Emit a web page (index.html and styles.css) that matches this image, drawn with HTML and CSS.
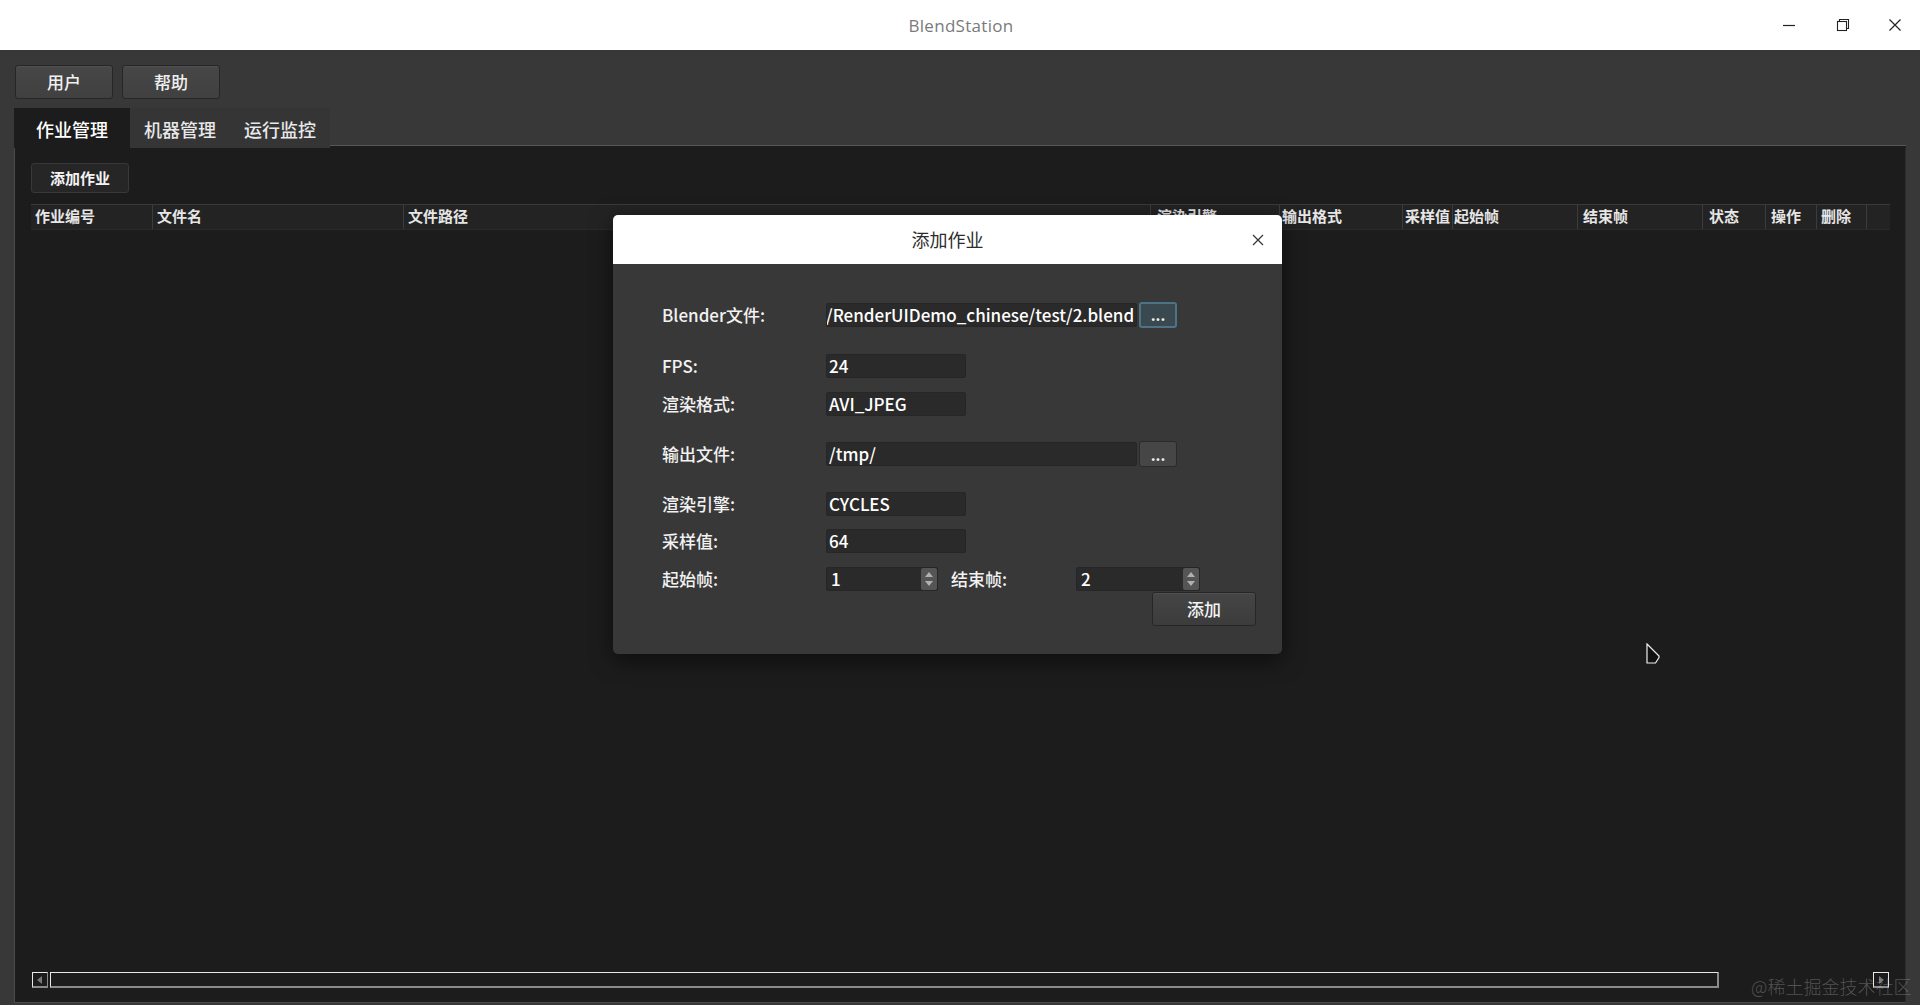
FILE: index.html
```html
<!DOCTYPE html>
<html lang="zh-CN">
<head>
<meta charset="utf-8">
<title>BlendStation</title>
<link rel="stylesheet" href="styles.css">
</head>
<body>
<div class="window">
  <header class="titlebar">
    <div></div>
    <div class="title">BlendStation</div>
    <div class="controls">
      <span class="ctl"><svg width="14" height="14" viewBox="0 0 14 14"><path d="M1 7.5h12" stroke="#222" stroke-width="1.2"/></svg></span>
      <span class="ctl"><svg width="14" height="14" viewBox="0 0 14 14" fill="none" stroke="#222" stroke-width="1.1"><rect x="1.5" y="3.5" width="9" height="9"/><path d="M3.5 3.5V1.5h9v9h-2"/></svg></span>
      <span class="ctl last"><svg width="14" height="14" viewBox="0 0 14 14"><path d="M1.5 1.5l11 11M12.5 1.5l-11 11" stroke="#222" stroke-width="1.2"/></svg></span>
    </div>
  </header>

  <main class="app">
    <div class="toolbar">
      <button class="tb-btn">用户</button>
      <button class="tb-btn">帮助</button>
    </div>
    <div class="tabs">
      <div class="tab active">作业管理</div>
      <div class="tab">机器管理</div>
      <div class="tab">运行监控</div>
      <div class="tab-fill"></div>
    </div>
    <section class="panel">
      <button class="small-btn">添加作业</button>
      <div class="table">
        <div class="thead">
          <div class="th c1">作业编号</div>
          <div class="th c2">文件名</div>
          <div class="th c3">文件路径</div>
          <div class="th c4">渲染引擎</div>
          <div class="th c5">输出格式</div>
          <div class="th c6">采样值</div>
          <div class="th c7">起始帧</div>
          <div class="th c8">结束帧</div>
          <div class="th c9">状态</div>
          <div class="th c10">操作</div>
          <div class="th c11">删除</div>
          <div class="th c12"></div>
        </div>
        <div class="tbody"></div>
      </div>
      <div class="hscroll">
        <div class="sb-arrow"><svg width="6" height="8" viewBox="0 0 6 8"><path d="M5 0L0 4l5 4z" fill="#777"/></svg></div>
        <div class="sb-track"></div>
        <div class="sb-arrow right"><svg width="6" height="8" viewBox="0 0 6 8"><path d="M1 0l5 4-5 4z" fill="#777"/></svg></div>
      </div>
    </section>
  </main>

  <div class="dialog">
    <div class="dlg-head">
      <div></div>
      <div class="dlg-title">添加作业</div>
      <div class="dlg-close"><svg width="12" height="12" viewBox="0 0 12 12"><path d="M1 1l10 10M11 1L1 11" stroke="#333" stroke-width="1.2"/></svg></div>
    </div>
    <div class="dlg-body">
      <div class="row tall">
        <div class="label">Blender文件:</div>
        <div class="inline">
          <div class="field wide scrolled">/RenderUIDemo_chinese/test/2.blend</div>
          <div class="dots focus">...</div>
        </div>
      </div>
      <div class="row gap-l">
        <div class="label">FPS:</div>
        <div class="field short">24</div>
      </div>
      <div class="row gap-s">
        <div class="label">渲染格式:</div>
        <div class="field short">AVI_JPEG</div>
      </div>
      <div class="row tall gap-m">
        <div class="label">输出文件:</div>
        <div class="inline">
          <div class="field wide">/tmp/</div>
          <div class="dots">...</div>
        </div>
      </div>
      <div class="row gap-m">
        <div class="label">渲染引擎:</div>
        <div class="field short">CYCLES</div>
      </div>
      <div class="row gap-t">
        <div class="label">采样值:</div>
        <div class="field short">64</div>
      </div>
      <div class="row gap-s">
        <div class="label">起始帧:</div>
        <div class="inline">
          <div class="spin s1"><span class="spin-val">1</span><span class="spin-arr"><svg width="10" height="20" viewBox="0 0 10 20"><path d="M5 3l4 5h-8z M5 17l4-5h-8z" fill="#b0b0b0"/></svg></span></div>
          <div class="label end-label">结束帧:</div>
          <div class="spin s2"><span class="spin-val">2</span><span class="spin-arr"><svg width="10" height="20" viewBox="0 0 10 20"><path d="M5 3l4 5h-8z M5 17l4-5h-8z" fill="#b0b0b0"/></svg></span></div>
        </div>
      </div>
      <div class="actions">
        <button class="add-btn">添加</button>
      </div>
    </div>
  </div>

  <div class="watermark">@稀土掘金技术社区</div>
  <svg class="cursor" width="14" height="21" viewBox="0 0 14 21"><path d="M1 1L13 13V14.5L9.5 20H1Z" fill="#111" stroke="#eee" stroke-width="1.2"/></svg>
</div>
</body>
</html>
```

FILE: styles.css
```css
* { box-sizing: border-box; }
html, body { margin: 0; padding: 0; }
body {
  width: 1920px;
  height: 1005px;
  overflow: hidden;
  background: #383838;
  font-family: "Noto Sans CJK SC", "Noto Sans", sans-serif;
  color: #eee;
}
button { font-family: inherit; cursor: default; }

.window {
  position: relative;
  width: 1920px;
  height: 1005px;
  display: flex;
  flex-direction: column;
}

/* title bar */
.titlebar {
  height: 50px;
  flex: 0 0 50px;
  background: #fff;
  display: grid;
  grid-template-columns: 1fr auto 1fr;
  align-items: center;
}
.title {
  font-family: "Open Sans", "Noto Sans", sans-serif;
  font-size: 17px;
  color: #7a7a7a;
  letter-spacing: 0.3px;
  padding-left: 2px;
}
.controls {
  justify-self: end;
  display: flex;
  height: 50px;
}
.ctl {
  width: 54px;
  height: 50px;
  display: flex;
  align-items: center;
  justify-content: center;
}
.ctl.last { width: 50px; }

/* app */
.app {
  flex: 1;
  display: flex;
  flex-direction: column;
  padding: 15px 14px 2px 14px;
}
.toolbar {
  display: flex;
  gap: 9px;
  padding-left: 1px;
}
.tb-btn {
  width: 98px;
  height: 34px;
  background: linear-gradient(#474747, #404040);
  border: 1px solid #262626;
  border-radius: 3px;
  color: #f0f0f0;
  font-size: 17px;
  font-weight: 500;
  padding: 0 0 2px 0;
  box-shadow: inset 0 1px 0 #505050;
}
.tabs {
  margin-top: 9px;
  height: 40px;
  display: flex;
  align-items: stretch;
}
.tab {
  width: 100px;
  display: flex;
  align-items: center;
  justify-content: center;
  font-size: 18px;
  font-weight: 500;
  color: #e8e8e8;
  background: #353535;
  padding-top: 1px;
}
.tab.active {
  width: 116px;
  background: #1c1c1c;
  color: #fff;
}
.tab-fill {
  flex: 1;
  align-self: flex-end;
  height: 3px;
  border-top: 1px solid #575757;
  background: #1c1c1c;
}

.panel {
  flex: 1;
  background: #1c1c1c;
  border-left: 1px solid #4a4a4a;
  border-right: 1px solid #2c2c2c;
  border-bottom: 1px solid #4a4a4a;
  padding: 15px 0 0 16px;
  display: flex;
  flex-direction: column;
}
.small-btn {
  align-self: flex-start;
  width: 98px;
  height: 30px;
  background: #262626;
  border: 1px solid #383838;
  border-radius: 3px;
  color: #f4f4f4;
  font-size: 15px;
  font-weight: 700;
  padding: 0 0 2px 0;
}
.table {
  margin-top: 11px;
  flex: 1;
  display: flex;
  flex-direction: column;
}
.thead {
  display: flex;
  height: 26px;
  background: #232323;
  border-top: 1px solid #3a3a3a;
  border-bottom: 1px solid #2a2a2a;
  width: 1859px;
}
.th {
  border-right: 1px solid #3c3c3c;
  font-size: 15px;
  font-weight: 700;
  color: #e6e6e6;
  padding-left: 4px;
  line-height: 22px;
  white-space: nowrap;
  overflow: hidden;
}
.c1 { width: 122px; }
.c2 { width: 251px; }
.c3 { width: 747px; }
.c4 { width: 129px; padding-left: 6px; }
.c5 { width: 123px; padding-left: 2px; }
.c6 { width: 50px; padding-left: 2px; }
.c7 { width: 125px; padding-left: 1px; }
.c8 { width: 125px; padding-left: 5px; }
.c9 { width: 63px; padding-left: 6px; }
.c10 { width: 51px; padding-left: 5px; }
.c11 { width: 50px; padding-left: 4px; }
.c12 { width: 23px; border-right: none; }
.tbody { flex: 1; }

.hscroll {
  display: flex;
  align-items: stretch;
  height: 16px;
  margin: 0 16px 14px 1px;
}
.sb-arrow {
  width: 16px;
  border-top: 1px solid #e8e8e8;
  border-left: 1px solid #e8e8e8;
  border-bottom: 2px solid #8a8a8a;
  border-right: 1px solid #8a8a8a;
  display: flex;
  align-items: center;
  justify-content: center;
}
.sb-arrow.right {
  margin-left: auto;
  border-right: 1px solid #e8e8e8;
}
.sb-track {
  width: 1669px;
  margin-left: 2px;
  border-top: 1px solid #e8e8e8;
  border-left: 1px solid #e8e8e8;
  border-bottom: 2px solid #8a8a8a;
  border-right: 2px solid #8a8a8a;
}

/* dialog */
.dialog {
  position: absolute;
  left: 613px;
  top: 215px;
  width: 669px;
  height: 439px;
  background: #383838;
  border-radius: 5px;
  box-shadow: 0 6px 22px rgba(0, 0, 0, 0.55);
  display: flex;
  flex-direction: column;
}
.dlg-head {
  height: 49px;
  flex: 0 0 49px;
  background: #fff;
  border-radius: 5px 5px 0 0;
  display: grid;
  grid-template-columns: 1fr auto 1fr;
  align-items: center;
}
.dlg-title {
  font-size: 18px;
  color: #2c2c2c;
  padding-bottom: 1px;
}
.dlg-close {
  justify-self: end;
  margin-right: 18px;
  display: flex;
}
.dlg-body {
  padding: 38px 26px 28px 49px;
  display: flex;
  flex-direction: column;
}
.row {
  display: grid;
  grid-template-columns: 164px auto;
  align-items: center;
  height: 24px;
}
.row.tall { height: 26px; }
.gap-l { margin-top: 26px; }
.gap-m { margin-top: 25px; }
.gap-s { margin-top: 14px; }
.gap-t { margin-top: 13px; }
.label {
  font-size: 17px;
  font-weight: 500;
  color: #f2f2f2;
  white-space: nowrap;
  line-height: 24px;
}
.inline {
  display: flex;
  align-items: center;
}
.field {
  height: 24px;
  background: #2a2a2a;
  border: 1px solid #262626;
  border-radius: 2px;
  font-size: 17px;
  font-weight: 500;
  line-height: 22px;
  color: #fff;
  padding-left: 2px;
  white-space: nowrap;
  overflow: hidden;
}
.field.short { width: 140px; }
.field.wide { width: 311px; }
.field.scrolled {
  padding-left: 0;
  text-indent: -1px;
}
.dots {
  width: 38px;
  height: 26px;
  margin-left: 2px;
  background: #464646;
  border: 1px solid #2a2a2a;
  border-radius: 3px;
  color: #f0f0f0;
  font-size: 15px;
  font-weight: 700;
  line-height: 26px;
  text-align: center;
}
.dots.focus {
  background: #3a4850;
  border: 2px solid #4d7387;
  line-height: 22px;
}
.spin {
  height: 24px;
  background: #2a2a2a;
  border: 1px solid #262626;
  border-radius: 2px;
  display: flex;
  align-items: stretch;
}
.spin.s1 { width: 112px; }
.spin.s2 { width: 124px; }
.spin-val {
  flex: 1;
  font-size: 17px;
  font-weight: 500;
  line-height: 22px;
  padding-left: 4px;
  color: #fff;
}
.spin-arr {
  width: 16px;
  background: #555;
  border-radius: 2px;
  display: flex;
  align-items: center;
  justify-content: center;
}
.end-label {
  width: 125px;
  margin-left: 13px;
}
.actions {
  display: flex;
  justify-content: flex-end;
  margin-top: 1px;
}
.add-btn {
  width: 104px;
  height: 34px;
  background: linear-gradient(#454545, #3c3c3c);
  border: 1px solid #262626;
  border-radius: 3px;
  color: #f4f4f4;
  font-size: 17px;
  font-weight: 500;
  padding: 0 0 2px 0;
  box-shadow: inset 0 1px 0 #505050;
}

.watermark {
  position: absolute;
  left: 1751px;
  top: 973px;
  font-size: 18px;
  color: rgba(200, 200, 200, 0.32);
  white-space: nowrap;
  font-weight: 300;
}
.cursor {
  position: absolute;
  left: 1646px;
  top: 643px;
}
```
